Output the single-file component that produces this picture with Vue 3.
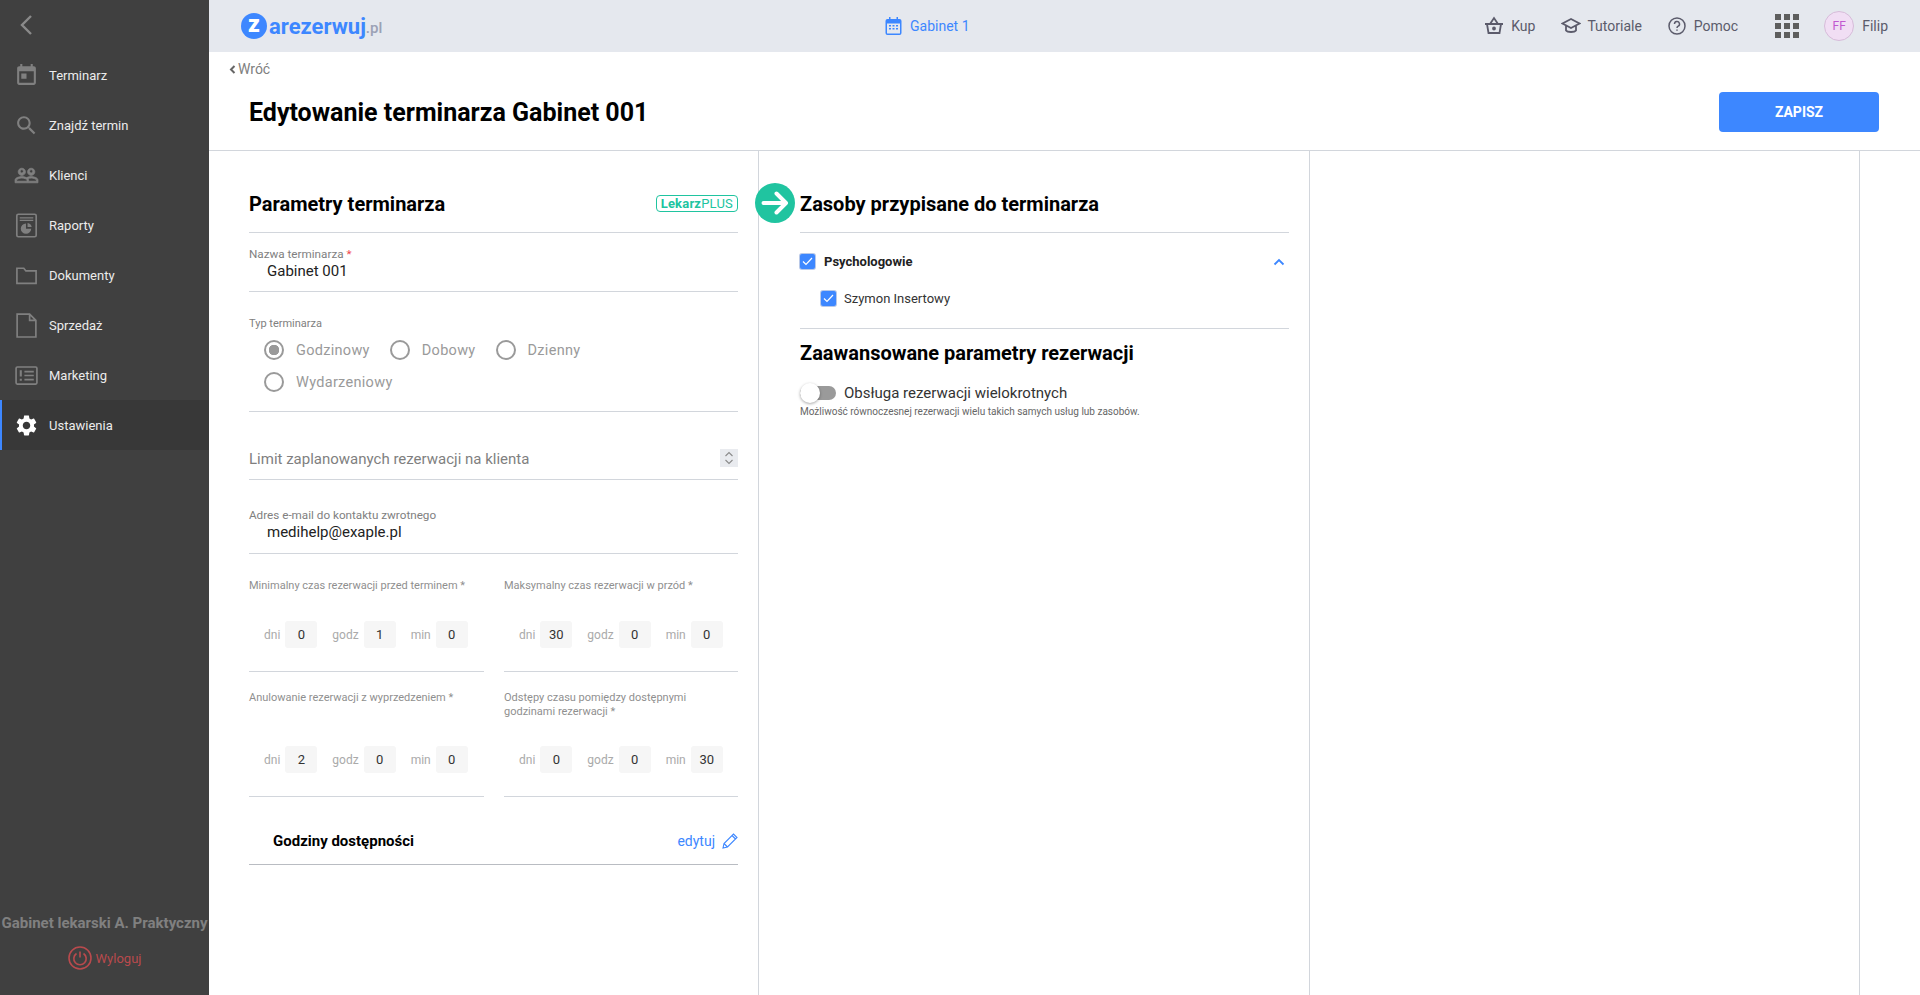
<script setup>
const menu = [
  { label: 'Terminarz', icon: 'calendar' },
  { label: 'Znajdź termin', icon: 'search' },
  { label: 'Klienci', icon: 'people' },
  { label: 'Raporty', icon: 'report' },
  { label: 'Dokumenty', icon: 'folder' },
  { label: 'Sprzedaż', icon: 'file' },
  { label: 'Marketing', icon: 'list' },
  { label: 'Ustawienia', icon: 'gear', active: true }
]

const types = [
  { label: 'Godzinowy', checked: true },
  { label: 'Dobowy' },
  { label: 'Dzienny' },
  { label: 'Wydarzeniowy' }
]

const times = [
  { label: 'Minimalny czas rezerwacji przed terminem *', values: [0, 1, 0] },
  { label: 'Maksymalny czas rezerwacji w przód *', values: [30, 0, 0] },
  { label: 'Anulowanie rezerwacji z wyprzedzeniem *', values: [2, 0, 0] },
  { label: 'Odstępy czasu pomiędzy dostępnymi godzinami rezerwacji *', values: [0, 0, 30] }
]

const units = ['dni', 'godz', 'min']
</script>

<template>
  <div class="page">
    <aside class="sidebar">
      <div class="collapse">
        <svg width="16" height="24" viewBox="0 0 16 24" fill="none" stroke="#8a8a8a" stroke-width="2.4"><path d="M13 3 4 12l9 9" /></svg>
      </div>
      <nav>
        <a v-for="item in menu" :key="item.label" class="menu-item" :class="{ active: item.active }">
          <svg class="menu-icon" viewBox="0 0 24 24" fill="#808080">
            <path v-if="item.icon === 'calendar'" d="M19 3h-1V1h-2v2H8V1H6v2H5c-1.11 0-1.99.9-1.99 2L3 19c0 1.1.89 2 2 2h14c1.1 0 2-.9 2-2V5c0-1.1-.9-2-2-2zm0 16H5V8h14v11zM7 10h5v5H7z" />
            <path v-else-if="item.icon === 'search'" d="M15.5 14h-.79l-.28-.27C15.41 12.59 16 11.11 16 9.5 16 5.91 13.09 3 9.5 3S3 5.91 3 9.5 5.91 16 9.5 16c1.61 0 3.09-.59 4.23-1.57l.27.28v.79l5 4.99L20.49 19l-4.99-5zm-6 0C7.01 14 5 11.99 5 9.5S7.01 5 9.5 5 14 7.01 14 9.5 11.99 14 9.5 14z" />
            <path v-else-if="item.icon === 'people'" stroke="#808080" stroke-width=".7" d="M16.5 13c-1.2 0-3.07.34-4.5 1-1.43-.67-3.3-1-4.5-1C5.33 13 1 14.08 1 16.25V19h22v-2.75c0-2.17-4.33-3.25-6.5-3.25zm-4 4.5h-10v-1.25c0-.54 2.56-1.75 5-1.75s5 1.21 5 1.75v1.25zm9 0H14v-1.25c0-.46-.2-.86-.52-1.22.88-.3 1.96-.53 3.02-.53 2.44 0 5 1.21 5 1.75v1.25zM7.5 12c1.93 0 3.5-1.57 3.5-3.5S9.43 5 7.5 5 4 6.57 4 8.5 5.57 12 7.5 12zm0-5.5c.83 0 1.5.67 1.5 1.5s-.67 1.5-1.5 1.5S6 8.83 6 8 6.67 6.5 7.5 6.5zm9 5.5c1.93 0 3.5-1.57 3.5-3.5S18.43 5 16.5 5 13 6.57 13 8.5s1.57 3.5 3.5 3.5zm0-5.5c.83 0 1.5.67 1.5 1.5s-.67 1.5-1.5 1.5S15 8.83 15 8s.67-1.5 1.5-1.5z" />
            <g v-else-if="item.icon === 'report'">
              <rect x="2.7" y="1.2" width="18.6" height="21.6" rx="1.5" fill="none" stroke="#808080" stroke-width="1.6" />
              <path d="M5.5 4h13v1.2h-13zM5.5 6.5h13v1.2h-13zM11.5 10a5 5 0 1 0 5 5h-5z" />
              <path d="M13 9.5a5 5 0 0 1 4 4h-4z" />
            </g>
            <path v-else-if="item.icon === 'folder'" d="M2.8 5h6.6l2 2.6h9.8v12H2.800z" fill="none" stroke="#808080" stroke-width="1.6" />
            <path v-else-if="item.icon === 'file'" d="M3 1h12l6 6v16H3zM15 1v6h6" fill="none" stroke="#808080" stroke-width="1.6" />
            <g v-else-if="item.icon === 'list'">
              <rect x="2" y="3.800" width="20" height="16.400" rx="1.2" fill="none" stroke="#808080" stroke-width="1.600" />
              <path d="M5.500 7h2v6h-2zM5.500 15h2v2h-2zM10 7.500h9V9h-9zM10 11.300h9v1.500h-9zM10 15.200h9v1.500h-9z" />
            </g>
            <path v-else d="M19.14 12.94c.04-.3.06-.61.06-.94 0-.32-.02-.64-.07-.94l2.03-1.58c.18-.14.23-.41.12-.61l-1.92-3.32c-.12-.22-.37-.29-.59-.22l-2.39.96c-.5-.38-1.03-.7-1.62-.94l-.36-2.54c-.04-.24-.24-.41-.48-.41h-3.84c-.24 0-.43.17-.47.41l-.36 2.54c-.59.24-1.13.57-1.62.94l-2.39-.96c-.22-.08-.47 0-.59.22L2.740 8.870c-.12.21-.08.47.12.61l2.030 1.580c-.05.3-.09.63-.09.94s.02.64.07.94l-2.030 1.580c-.18.14-.23.41-.12.61l1.920 3.320c.12.22.37.29.59.22l2.390-.96c.5.38 1.030.7 1.620.94l.36 2.540c.05.24.24.41.48.41h3.840c.24 0 .44-.17.47-.41l.36-2.540c.59-.24 1.130-.56 1.620-.94l2.390.96c.22.08.47 0 .59-.22l1.920-3.320c.12-.22.07-.47-.12-.61l-2.010-1.580zM12 15.600c-1.980 0-3.600-1.620-3.600-3.600s1.620-3.600 3.600-3.600 3.600 1.620 3.600 3.600-1.620 3.600-3.600 3.600z" fill="#fff" />
          </svg>
          <span>{{ item.label }}</span>
        </a>
      </nav>
      <div class="side-footer">
        <div class="clinic">Gabinet lekarski A. Praktyczny</div>
        <div class="logout">
          <svg width="24" height="24" viewBox="0 0 24 24" fill="none" stroke="#b94a4d" stroke-width="1.600">
            <circle cx="12" cy="12" r="11" />
            <path d="M8.500 7.500a6.200 6.200 0 1 0 7 0M12 5.500v6" />
          </svg>
          <span>Wyloguj</span>
        </div>
      </div>
    </aside>

    <div class="main">
      <header class="topbar">
        <div class="logo">
          <span class="logo-z">z</span><span class="logo-name">arezerwuj</span><span class="logo-tld">.pl</span>
        </div>
        <div class="office">
          <svg width="17" height="18" viewBox="0 0 17 18" fill="#3d87ff">
            <path d="M4 0h1.500v2h6V0H13v2h1.500A2 2 0 0 1 16.500 4v12a2 2 0 0 1-2 2h-12a2 2 0 0 1-2-2V4a2 2 0 0 1 2-2H4zM2 6.500V16a.5.5 0 0 0 .5.5h12A.5.5 0 0 0 15 16V6.500z" />
            <path d="M4 8h2v1.500H4zM7.500 8h2v1.500h-2zM11 8h2v1.500h-2zM4 11h2v1.500H4zM7.500 11h2v1.500h-2zM11 11h2v1.500h-2z" />
          </svg>
          <span>Gabinet 1</span>
        </div>
        <div class="top-links">
          <a class="top-link">
            <svg width="20" height="20" viewBox="0 0 20 20" fill="none" stroke="#5b5b6b" stroke-width="1.800">
              <path d="M1 8h18M3 8l1.500 9h11L17 8M6 8l4-6 4 6" />
              <circle cx="10" cy="12.500" r="1" fill="#5b5b6b" />
            </svg>
            <span>Kup</span>
          </a>
          <a class="top-link tutorials">
            <svg width="20" height="20" viewBox="0 0 20 20" fill="none" stroke="#5b5b6b" stroke-width="1.800">
              <path d="M10 3 1.500 7.500 10 12l8.500-4.500zM5 10v4.500c1.500 2 8.500 2 10 0V10" />
            </svg>
            <span>Tutoriale</span>
          </a>
          <a class="top-link help">
            <svg width="18" height="18" viewBox="0 0 18 18" fill="none" stroke="#5b5b6b" stroke-width="1.500">
              <circle cx="9" cy="9" r="8" />
              <path d="M6.500 7a2.500 2.500 0 1 1 3.700 2.200c-.8.450-1.200.9-1.200 1.800" />
              <path d="M9 12.400v1.300" />
            </svg>
            <span>Pomoc</span>
          </a>
          <div class="apps">
            <i v-for="n in 9" :key="n"></i>
          </div>
          <div class="avatar">FF</div>
          <span class="user">Filip</span>
        </div>
      </header>

      <div class="page-head">
        <a class="back">
          <svg width="7" height="9" viewBox="0 0 7 9" fill="none" stroke="#666" stroke-width="2"><path d="M5.500 1 2 4.500 5.500 8" /></svg>
          Wróć
        </a>
        <div class="title-row">
          <h1>Edytowanie terminarza Gabinet 001</h1>
          <button class="btn-save">ZAPISZ</button>
        </div>
      </div>

      <div class="columns">
        <section class="col">
          <div class="section-head">
            <h2>Parametry terminarza</h2>
            <span class="plan"><b>Lekarz</b>PLUS</span>
          </div>

          <div class="field name-field">
            <label>Nazwa terminarza <em>*</em></label>
            <div class="value">Gabinet 001</div>
          </div>

          <div class="type-field">
            <label>Typ terminarza</label>
            <div class="radios">
              <div v-for="t in types" :key="t.label" class="radio">
                <span class="radio-dot" :class="{ checked: t.checked }"></span>
                <span>{{ t.label }}</span>
              </div>
            </div>
          </div>

          <div class="limit-field">
            <span>Limit zaplanowanych rezerwacji na klienta</span>
            <span class="spinner">
              <svg width="10" height="14" viewBox="0 0 10 14" fill="none" stroke="#8a8a8a" stroke-width="1.100"><path d="M1.500 5 5 1.500 8.500 5M1.500 9 5 12.500 8.500 9" /></svg>
            </span>
          </div>

          <div class="field mail-field">
            <label>Adres e-mail do kontaktu zwrotnego</label>
            <div class="value">medihelp@exaple.pl</div>
          </div>

          <div class="time-grid">
            <div v-for="t in times" :key="t.label" class="time-cell">
              <div class="time-label">{{ t.label }}</div>
              <div class="time-row">
                <div v-for="(v, i) in t.values" :key="i" class="time-unit">
                  <span class="unit">{{ units[i] }}</span>
                  <span class="time-box">{{ v }}</span>
                </div>
              </div>
            </div>
          </div>

          <div class="hours">
            <strong>Godziny dostępności</strong>
            <a class="edit">
              edytuj
              <svg width="16" height="16" viewBox="0 0 16 16" fill="none" stroke="#3d87ff" stroke-width="1.100"><path d="M1 15l1-4.500L11.500 1 15 4.500 5.500 14zM2 10.500 5.500 14M10 2.500 13.500 6" /></svg>
            </a>
          </div>
        </section>

        <section class="col col-res">
          <span class="arrow-badge">
            <svg width="28" height="24" viewBox="0 0 28 24" fill="none" stroke="#fff" stroke-width="4" stroke-linecap="round" stroke-linejoin="round"><path d="M2.500 12h22M15.500 2.500l9.500 9.500-9.500 9.500" /></svg>
          </span>
          <div class="section-head">
            <h2>Zasoby przypisane do terminarza</h2>
          </div>
          <div class="group-row">
            <span class="check">
              <svg width="11" height="9" viewBox="0 0 11 9" fill="none" stroke="#fff" stroke-width="1.200"><path d="M1 4.500 4 7.500 10 1" /></svg>
            </span>
            <strong>Psychologowie</strong>
            <svg class="chevron" width="12" height="8" viewBox="0 0 12 8" fill="none" stroke="#3d87ff" stroke-width="1.800"><path d="M1.500 6.500 6 2l4.500 4.500" /></svg>
          </div>
          <div class="child-row">
            <span class="check">
              <svg width="11" height="9" viewBox="0 0 11 9" fill="none" stroke="#fff" stroke-width="1.200"><path d="M1 4.500 4 7.500 10 1" /></svg>
            </span>
            <span>Szymon Insertowy</span>
          </div>
          <div class="advanced">
            <h2>Zaawansowane parametry rezerwacji</h2>
            <div class="switch-row">
              <span class="switch"><i></i></span>
              <span>Obsługa rezerwacji wielokrotnych</span>
            </div>
            <p>Możliwość równoczesnej rezerwacji wielu takich samych usług lub zasobów.</p>
          </div>
        </section>

        <section class="col col-last"></section>
      </div>
    </div>
  </div>
</template>

<style>
body {
  margin: 0;
  overflow: hidden;
}
</style>

<style scoped>
.page {
  display: flex;
  height: 100vh;
  font-family: Roboto, "Liberation Sans", sans-serif;
  background: #fff;
  color: #000;
}

.sidebar {
  width: 209px;
  flex-shrink: 0;
  display: flex;
  flex-direction: column;
  background: #404040;
}

.collapse {
  height: 50px;
  padding-left: 18px;
  display: flex;
  align-items: center;
}

.menu-item {
  height: 50px;
  padding-left: 14px;
  display: flex;
  align-items: center;
  gap: 10px;
  font-size: 13px;
  color: #ececec;
}

.menu-item.active {
  padding-left: 12px;
  border-left: 2px solid #3d87ff;
  background: #383838;
}

.menu-icon {
  width: 25px;
  height: 25px;
  flex-shrink: 0;
}

.side-footer {
  margin-top: auto;
  padding-bottom: 25px;
  text-align: center;
}

.clinic {
  font-size: 15px;
  font-weight: 700;
  color: #808080;
  white-space: nowrap;
}

.logout {
  margin-top: 14px;
  display: flex;
  justify-content: center;
  align-items: center;
  gap: 4px;
  font-size: 13px;
  color: #b94a4d;
}

.main {
  flex: 1;
  min-width: 0;
  display: flex;
  flex-direction: column;
}

.topbar {
  height: 52px;
  padding: 0 32px;
  display: flex;
  align-items: center;
  background: #e5e8ee;
  color: #5b5b6b;
  font-size: 14px;
}

.logo {
  width: 644px;
  display: flex;
  align-items: center;
}

.logo-z {
  width: 26px;
  height: 26px;
  border-radius: 50%;
  background: #3d87ff;
  color: #fff;
  font-size: 23px;
  font-weight: 900;
  line-height: 23px;
  text-align: center;
}

.logo-name {
  margin-left: 2px;
  font-size: 22px;
  font-weight: 700;
  color: #3d87ff;
}

.logo-tld {
  margin-top: 3px;
  font-size: 15px;
  font-weight: 500;
  color: #9ba1b5;
}

.office {
  display: flex;
  align-items: center;
  gap: 8px;
  color: #3d87ff;
}

.top-links {
  margin-left: auto;
  display: flex;
  align-items: center;
}

.top-link {
  margin-right: 26px;
  display: flex;
  align-items: center;
  gap: 7px;
}

.top-link.tutorials {
  gap: 6px;
}

.top-link.help {
  margin-right: 37px;
  gap: 8px;
}

.apps {
  width: 24px;
  height: 24px;
  display: grid;
  grid-template-columns: repeat(3, 6px);
  grid-auto-rows: 6px;
  gap: 3px;
}

.apps i {
  background: #5e5e5e;
}

.avatar {
  width: 30px;
  height: 30px;
  margin-left: 25px;
  box-sizing: border-box;
  border: 1px solid #d6bcd9;
  border-radius: 50%;
  background: #f1def4;
  color: #c158d0;
  font-size: 12px;
  line-height: 28px;
  text-align: center;
}

.user {
  margin-left: 8px;
}

.page-head {
  height: 99px;
  box-sizing: border-box;
  border-bottom: 1px solid #d2d6dc;
  padding: 9px 41px 0 20px;
}

.back {
  display: flex;
  align-items: center;
  gap: 2px;
  font-size: 14px;
  line-height: 16px;
  color: #808080;
}

.title-row {
  margin-top: 15px;
  padding-left: 20px;
  display: flex;
  justify-content: space-between;
  align-items: center;
}

h1 {
  margin: 0;
  font-size: 25px;
  font-weight: 700;
}

h2 {
  margin: 0;
  font-size: 20px;
  line-height: 24px;
  font-weight: 700;
}

.btn-save {
  width: 160px;
  height: 40px;
  border: none;
  border-radius: 4px;
  background: #3d87ff;
  color: #fff;
  font-family: inherit;
  font-size: 14px;
  font-weight: 700;
}

.columns {
  flex: 1;
  display: flex;
}

.col {
  width: 550px;
  box-sizing: border-box;
  padding: 41px 20px 0 40px;
  border-right: 1px solid #d2d6dc;
}

.col-res {
  position: relative;
  width: 551px;
  padding-left: 41px;
}

.section-head {
  height: 41px;
  box-sizing: border-box;
  border-bottom: 1px solid #d2d6dc;
  display: flex;
  justify-content: space-between;
  align-items: flex-start;
}

.plan {
  margin-top: 3px;
  padding: 0 4px;
  border: 1px solid #20c4a0;
  border-radius: 4px;
  color: #20c4a0;
  font-size: 13px;
  letter-spacing: .2px;
  line-height: 15px;
}

.plan b {
  font-weight: 700;
}

label {
  display: block;
  font-size: 11.700px;
  line-height: 13px;
  color: #808080;
}

label em {
  color: #f0484d;
  font-style: normal;
}

.field {
  box-sizing: border-box;
  border-bottom: 1px solid #d2d6dc;
}

.value {
  padding-left: 18px;
  font-size: 15px;
  line-height: 20px;
  color: #222;
}

.name-field {
  height: 59px;
  padding-top: 15px;
}

.type-field {
  height: 120px;
  box-sizing: border-box;
  padding-top: 25px;
  border-bottom: 1px solid #d2d6dc;
}

.type-field label {
  font-size: 11px;
}

.radios {
  width: 340px;
  margin-top: 10px;
  padding-left: 15px;
  display: flex;
  flex-wrap: wrap;
  gap: 12px 20px;
}

.radio {
  height: 20px;
  display: flex;
  align-items: center;
  gap: 12px;
  font-size: 14.500px;
  letter-spacing: .3px;
  color: #9a9a9a;
}

.radio-dot {
  width: 20px;
  height: 20px;
  box-sizing: border-box;
  border: 2px solid #9a9a9a;
  border-radius: 50%;
}

.radio-dot.checked {
  background: radial-gradient(circle, #9a9a9a 0 5px, transparent 5.500px);
}

.limit-field {
  height: 68px;
  box-sizing: border-box;
  padding-top: 37px;
  border-bottom: 1px solid #d2d6dc;
  display: flex;
  justify-content: space-between;
  align-items: flex-start;
  font-size: 15px;
  line-height: 20px;
  color: #7f7f7f;
}

.spinner {
  width: 18px;
  height: 18px;
  background: #e9ebef;
  display: flex;
  justify-content: center;
  align-items: center;
}

.mail-field {
  height: 74px;
  padding-top: 29px;
}

.time-grid {
  display: grid;
  grid-template-columns: 235px 234px;
  column-gap: 20px;
}

.time-cell {
  height: 118px;
  box-sizing: border-box;
  padding-top: 25px;
  border-bottom: 1px solid #d2d6dc;
  display: flex;
  flex-direction: column;
}

.time-cell:nth-child(n + 3) {
  height: 125px;
  padding-top: 19px;
}

.time-label {
  font-size: 11px;
  line-height: 14px;
  color: #8f8f8f;
}

.time-row {
  margin-top: auto;
  margin-bottom: 23px;
  padding-left: 15px;
  display: flex;
  gap: 15px;
}

.time-unit {
  display: flex;
  align-items: center;
  gap: 5px;
}

.unit {
  font-size: 12px;
  color: #aaa;
}

.time-box {
  width: 32px;
  height: 27px;
  border-radius: 3px;
  background: #f6f6f6;
  color: #333;
  font-size: 13px;
  line-height: 27px;
  text-align: center;
}

.hours {
  height: 68px;
  box-sizing: border-box;
  padding: 35px 0 0 24px;
  border-bottom: 1px solid #b9bcc2;
  display: flex;
  justify-content: space-between;
  align-items: flex-start;
  font-size: 15px;
  line-height: 18px;
}

.edit {
  display: flex;
  align-items: center;
  gap: 7px;
  font-size: 14px;
  color: #3d87ff;
}

.arrow-badge {
  position: absolute;
  left: -4px;
  top: 32px;
  width: 40px;
  height: 40px;
  border-radius: 50%;
  background: #20c4a0;
  display: flex;
  justify-content: center;
  align-items: center;
}

.check {
  width: 15px;
  height: 15px;
  border-radius: 2px;
  background: #3d87ff;
  box-shadow: 0 0 0 1px #b9c9e8;
  display: flex;
  justify-content: center;
  align-items: center;
}

.group-row {
  margin-top: 21px;
  display: flex;
  align-items: center;
  font-size: 13px;
  line-height: 15px;
}

.group-row strong {
  margin-left: 9px;
  color: #222;
  font-weight: 700;
}

.chevron {
  margin-left: auto;
  margin-right: 4px;
}

.child-row {
  margin-top: 22px;
  padding-left: 21px;
  display: flex;
  align-items: center;
  gap: 8px;
  font-size: 13px;
  line-height: 15px;
  color: #333;
}

.advanced {
  margin-top: 22px;
  padding-top: 12px;
  border-top: 1px solid #d2d6dc;
}

.switch-row {
  margin-top: 18px;
  display: flex;
  align-items: center;
  gap: 8px;
  font-size: 15px;
  line-height: 20px;
  color: #333;
}

.switch {
  position: relative;
  width: 36px;
  height: 14px;
  border-radius: 7px;
  background: #9a9a9a;
}

.switch i {
  position: absolute;
  left: 0;
  top: -3px;
  width: 20px;
  height: 20px;
  border-radius: 50%;
  background: #fff;
  box-shadow: 0 1px 3px rgba(0, 0, 0, .35);
}

.advanced p {
  margin: 2px 0 0;
  font-size: 10px;
  line-height: 14px;
  color: #666;
}
</style>
